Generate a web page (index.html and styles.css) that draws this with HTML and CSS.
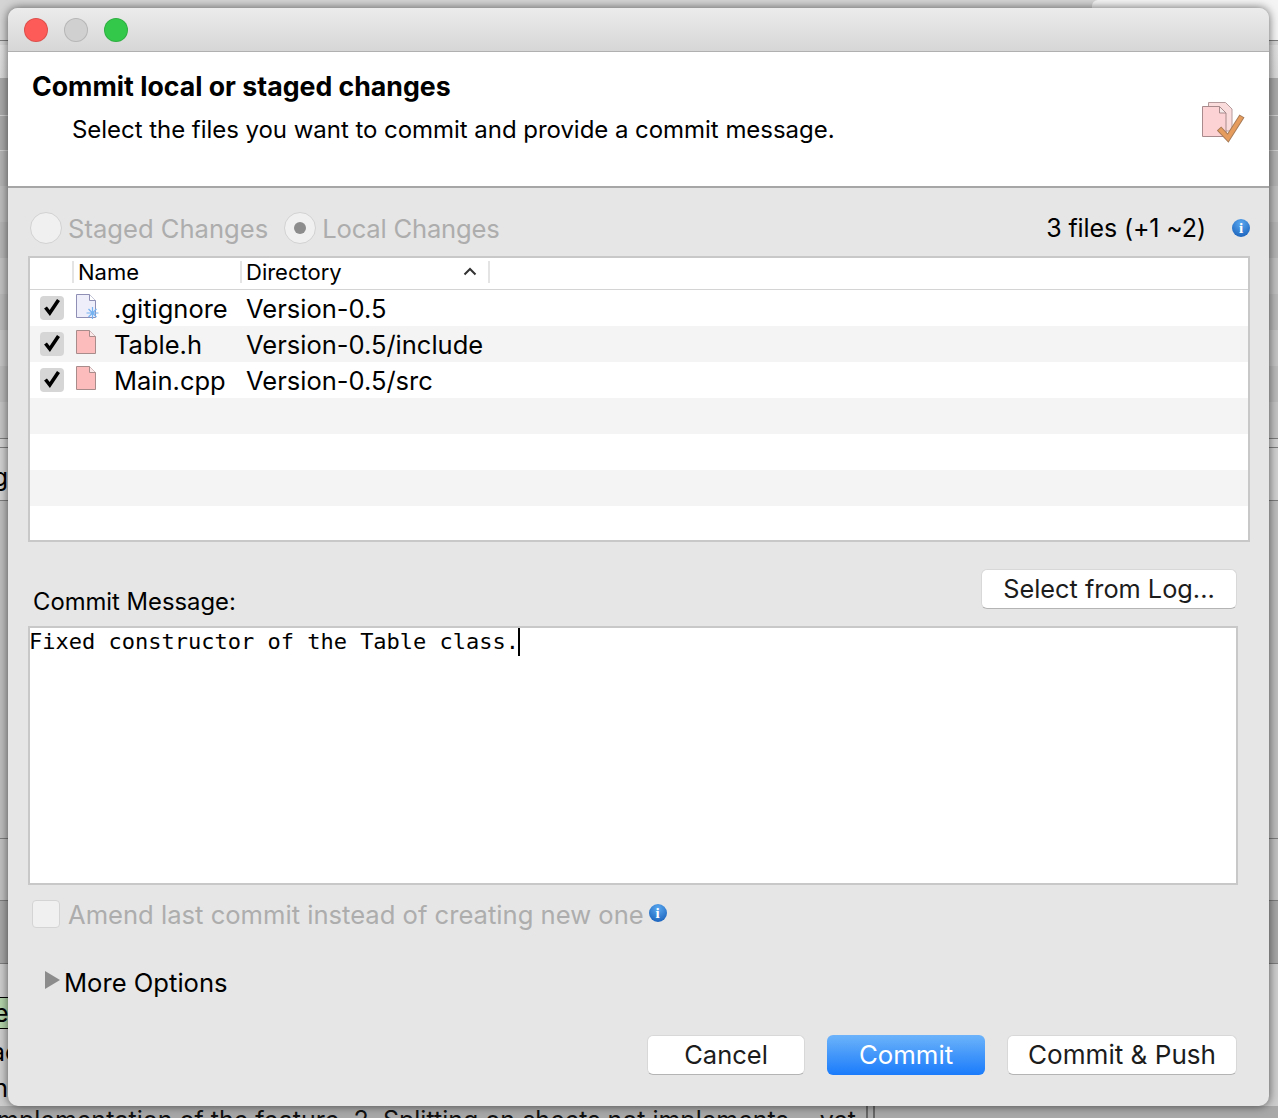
FILE: index.html
```html
<!DOCTYPE html>
<html lang="en">
<head>
    <meta charset="UTF-8">
    <title>Commit local or staged changes</title>
    <link rel="stylesheet" href="styles.css">
</head>
<body>

<div id="backdrop">
    <div class="bgTab"></div>
    <div class="bgLine soft" style="top: 115px"></div>
    <div class="bgLine soft" style="top: 150px"></div>
    <div class="bgLine" style="top: 40px"></div>
    <div class="bgLine" style="top: 438px"></div>
    <div class="bgLine" style="top: 447px"></div>
    <div class="bgLine" style="top: 500px"></div>
    <div class="bgLine" style="top: 838px"></div>
    <div class="bgLine" style="top: 900px"></div>
    <div class="bgLine" style="top: 963px"></div>
    <span class="bgLetter" style="top: 462px">g</span>
    <span class="bgCell">e</span>
    <span class="bgLetter ac" style="top: 1037px">ac</span>
    <span class="bgLetter" style="top: 1073px">n</span>
    <div class="bgText">implementation of the feature. 2. Splitting on sheets not implements <span class="bgTail">yet</span></div>
    <div class="bgRule first"></div>
    <div class="bgRule second"></div>
</div>

<div id="dialog">
    <div id="titleBar">
        <span class="light red"></span>
        <span class="light grey"></span>
        <span class="light green"></span>
    </div>

    <div id="banner">
        <div>
            <h2>Commit local or staged changes</h2>
            <p>Select the files you want to commit and provide a commit message.</p>
        </div>
        <svg class="bannerIcon" width="44" height="42" viewBox="0 0 44 42">
            <path d="M7.5 1.500H24.500L31 8V30H7.500z" fill="#fbdcdd" stroke="#b59a9c"/>
            <path d="M1.500 5.500H18.500L25 12V35.500H1.500z" fill="#fdd2d4" stroke="#a88a8c"/>
            <path d="M18.500 5.500V12H25z" fill="#f6eaea" stroke="#a88a8c"/>
            <path d="M18 27.500L27 37L41 15" fill="none" stroke="#a87c58" stroke-width="6"/>
            <path d="M18.700 28.200L27 37L40.500 15.800" fill="none" stroke="#e59c5c" stroke-width="4"/>
        </svg>
    </div>

    <div id="content">
        <div class="modeRow">
            <span class="radio"></span>
            <span class="modeLabel">Staged Changes</span>
            <span class="radio selected"></span>
            <span class="modeLabel localLabel">Local Changes</span>
            <span class="fileCount">3 files (+1 ~2)</span>
            <span class="infoIcon">i</span>
        </div>

        <div id="fileTable">
            <div class="tableHead">
                <div class="colCheck"></div>
                <div class="colName">Name</div>
                <div class="colDir">Directory
                    <svg class="sortArrow" width="14" height="9" viewBox="0 0 14 9"><path d="M1.500 7.500L7 2l5.500 5.500" fill="none" stroke="#333" stroke-width="2"/></svg>
                </div>
            </div>
            <div class="fileRow">
                <div class="colCheck">
                    <svg class="tick" width="24" height="24" viewBox="0 0 24 24"><path d="M5.500 11.500L9.800 17L18.500 4" fill="none" stroke="#000" stroke-width="3.600"/></svg>
                </div>
                <div class="fileIcon">
                    <svg width="24" height="28" viewBox="0 0 24 28">
                        <path d="M.5 .5H13.500L19.500 6.500V23.500H.5z" fill="#eeeefa" stroke="#8f8fb5"/>
                        <path d="M13.500 .5V6.500H19.500" fill="#fff" stroke="#8f8fb5"/>
                        <path d="M16.500 13v12M10.500 19h12M12.500 15l8 8M20.500 15l-8 8" stroke="#74b2f0" stroke-width="1.200"/>
                    </svg>
                </div>
                <div class="colName">.gitignore</div>
                <div class="colDir">Version-0.5</div>
            </div>
            <div class="fileRow">
                <div class="colCheck">
                    <svg class="tick" width="24" height="24" viewBox="0 0 24 24"><path d="M5.500 11.500L9.800 17L18.500 4" fill="none" stroke="#000" stroke-width="3.600"/></svg>
                </div>
                <div class="fileIcon">
                    <svg width="24" height="28" viewBox="0 0 24 28">
                        <path d="M.5 .5H13.500L19.500 6.500V23.500H.5z" fill="#fdbcbc" stroke="#a88c8c"/>
                        <path d="M13.500 .5V6.500H19.500" fill="#fbe8e8" stroke="#a88c8c"/>
                    </svg>
                </div>
                <div class="colName">Table.h</div>
                <div class="colDir">Version-0.5/include</div>
            </div>
            <div class="fileRow">
                <div class="colCheck">
                    <svg class="tick" width="24" height="24" viewBox="0 0 24 24"><path d="M5.500 11.500L9.800 17L18.500 4" fill="none" stroke="#000" stroke-width="3.600"/></svg>
                </div>
                <div class="fileIcon">
                    <svg width="24" height="28" viewBox="0 0 24 28">
                        <path d="M.5 .5H13.500L19.500 6.500V23.500H.5z" fill="#fdbcbc" stroke="#a88c8c"/>
                        <path d="M13.500 .5V6.500H19.500" fill="#fbe8e8" stroke="#a88c8c"/>
                    </svg>
                </div>
                <div class="colName">Main.cpp</div>
                <div class="colDir">Version-0.5/src</div>
            </div>
            <div class="fileRow"></div>
            <div class="fileRow"></div>
            <div class="fileRow"></div>
            <div class="fileRow"></div>
        </div>

        <div class="messageHead">
            <label>Commit Message:</label>
            <button class="btn logBtn">Select from Log...</button>
        </div>
        <div id="messageBox">Fixed constructor of the Table class.<span class="caret"></span></div>

        <div class="amendRow">
            <span class="emptyCheck"></span>
            <span class="modeLabel">Amend last commit instead of creating new one</span>
            <span class="infoIcon small">i</span>
        </div>

        <div class="moreRow">
            <span class="triangle"></span>
            More Options
        </div>

        <div class="buttonRow">
            <button class="btn cancelBtn">Cancel</button>
            <button class="btn primary commitBtn">Commit</button>
            <button class="btn pushBtn">Commit &amp; Push</button>
        </div>
    </div>
</div>

</body>
</html>
```
FILE: styles.css
```css
body {
    font-family: 'Inter', 'Liberation Sans', sans-serif;
    color: #000;
    margin: 0;
    width: 1278px;
    height: 1118px;
    overflow: hidden;
    position: relative;
}

/* blurred app behind the sheet, bands are its table rows */
#backdrop {
    position: absolute;
    inset: 0;
    overflow: hidden;
    background: linear-gradient(to bottom,
        #d4d4d4 0, #d4d4d4 45px,
        #e0e0e0 45px, #d8d8d8 78px,
        #a8a8a8 78px, #a8a8a8 150px,
        #b2b2b2 150px, #b2b2b2 186px,
        #bcbcbc 186px, #bcbcbc 222px,
        #b4b4b4 222px, #b4b4b4 258px,
        #c0c0c0 258px, #c0c0c0 294px,
        #b8b8b8 294px, #b8b8b8 330px,
        #c4c4c4 330px, #c4c4c4 366px,
        #bababa 366px, #bababa 402px,
        #c4c4c4 402px, #c4c4c4 438px,
        #d0d0d0 438px, #d0d0d0 500px,
        #bdbdbd 500px, #bdbdbd 838px,
        #c0c0c0 838px, #c0c0c0 900px,
        #a6a6a6 900px, #a6a6a6 963px,
        #cdcdcd 963px, #cdcdcd 1106px,
        #a8a8a8 1106px, #a8a8a8 1118px);
}

.bgTab {
    position: absolute;
    left: 1092px;
    top: 0;
    width: 186px;
    height: 40px;
    background: #f4f4f4;
    border-radius: 6px 0 0 0;
}

.bgLine {
    position: absolute;
    left: 0;
    width: 100%;
    height: 1px;
    background: #7d7d7d;
}

.bgLine.soft {
    background: #cfcfcf;
}

.bgLetter {
    position: absolute;
    left: -12px;
    font-size: 25px;
    line-height: 30px;
    width: 20px;
    text-align: right;
    white-space: nowrap;
}

.bgLetter.ac {
    left: -9px;
}

.bgCell {
    position: absolute;
    left: 0;
    top: 997px;
    width: 8px;
    height: 32px;
    overflow: hidden;
    background: #b2d4aa;
    border-top: 1px solid #000;
    border-bottom: 1px solid #000;
    font-size: 25px;
    line-height: 30px;
    box-sizing: border-box;
    text-indent: -6px;
}

.bgText {
    position: absolute;
    left: -9px;
    top: 1105px;
    font-size: 25px;
    line-height: 30px;
    white-space: nowrap;
    color: #111;
}

.bgTail {
    margin-left: 24px;
}

.bgRule {
    position: absolute;
    top: 1106px;
    height: 12px;
    width: 2px;
    background: #666;
}

.bgRule.first { left: 866px; }
.bgRule.second { left: 873px; }

#dialog {
    position: absolute;
    left: 8px;
    top: 8px;
    width: 1261px;
    height: 1098px;
    display: flex;
    flex-direction: column;
    background-color: #e6e6e6;
    border-radius: 10px;
    overflow: hidden;
    box-shadow: 0 0 10px rgba(0, 0, 0, 0.6);
}

#titleBar {
    height: 43px;
    flex: none;
    display: flex;
    align-items: center;
    gap: 16px;
    padding-left: 16px;
    background: linear-gradient(to bottom, #ececec, #d6d6d6);
    border-bottom: 1px solid #b0b0b0;
}

.light {
    width: 24px;
    height: 24px;
    border-radius: 50%;
    box-sizing: border-box;
    border: 1px solid rgba(0, 0, 0, 0.12);
}

.red { background-color: #fc5b57; }
.grey { background-color: #d0d0d0; }
.green { background-color: #34c84a; }

#banner {
    height: 134px;
    flex: none;
    display: flex;
    justify-content: space-between;
    background-color: #fff;
    border-bottom: 2px solid #a6a6a6;
}

#banner h2 {
    margin: 18px 0 0 24px;
    font-size: 26.700px;
    line-height: 32px;
    font-weight: 700;
}

#banner p {
    margin: 12px 0 0 64px;
    font-size: 24px;
    line-height: 32px;
    letter-spacing: -0.04px;
}

.bannerIcon {
    margin: 49px 24px 0 0;
}

#content {
    flex: 1;
    display: flex;
    flex-direction: column;
    padding: 0 19px 0 20px;
}

.modeRow {
    height: 68px;
    flex: none;
    display: flex;
    align-items: center;
    font-size: 25.600px;
    box-sizing: border-box;
    padding: 12px 0 0 2px;
}

.radio {
    width: 32px;
    height: 32px;
    border-radius: 50%;
    background-color: #f0f0f0;
    border: 1px solid #d2d2d2;
    box-sizing: border-box;
    margin-right: 6px;
    display: flex;
    align-items: center;
    justify-content: center;
}

.radio.selected {
    margin-left: 16px;
}

.radio.selected::after {
    content: '';
    width: 12px;
    height: 12px;
    border-radius: 50%;
    background-color: #8c8c8c;
}

.modeLabel {
    color: #adadad;
}

.localLabel {
    letter-spacing: -0.2px;
}

.fileCount {
    margin-left: auto;
    margin-right: 26px;
    font-size: 25px;
    letter-spacing: -0.12px;
}

.infoIcon {
    width: 18px;
    height: 18px;
    border-radius: 50%;
    background: radial-gradient(circle at 50% 25%, #5aa8f0, #1158b4);
    color: #fff;
    font-family: 'Liberation Serif', serif;
    font-weight: 700;
    font-size: 15px;
    line-height: 18px;
    text-align: center;
}

.infoIcon.small {
    margin: -3px 0 0 5px;
}

#fileTable {
    height: 286px;
    flex: none;
    overflow: hidden;
    background-color: #fff;
    border: 2px solid #c8c8c8;
    box-sizing: border-box;
}

.tableHead {
    height: 32px;
    display: flex;
    align-items: center;
    font-size: 22px;
    border-bottom: 1px solid #d4d4d4;
    box-sizing: border-box;
    padding-bottom: 3px;
}

.tableHead .colCheck {
    width: 44px;
    box-sizing: border-box;
    flex: none;
    height: 22px;
    border-right: 2px solid #e4e4e4;
}

.tableHead .colName {
    width: 168px;
    flex: none;
    padding-left: 4px;
    box-sizing: border-box;
    height: 22px;
    line-height: 22px;
    border-right: 2px solid #e4e4e4;
}

.tableHead .colDir {
    width: 248px;
    height: 22px;
    line-height: 22px;
    padding-left: 4px;
    box-sizing: border-box;
    border-right: 2px solid #e4e4e4;
    position: relative;
}

.sortArrow {
    position: absolute;
    right: 11px;
    top: 6px;
}

.fileRow {
    height: 36px;
    flex: none;
    display: flex;
    align-items: center;
    font-size: 25.500px;
}

.fileRow:nth-child(odd) {
    background-color: #f4f4f4;
}

.fileRow .colCheck {
    width: 46px;
    flex: none;
    align-self: flex-start;
    padding: 6px 0 0 10px;
    box-sizing: border-box;
}

.fileRow .colName {
    width: 132px;
    flex: none;
}

.fileIcon {
    width: 38px;
    flex: none;
    align-self: flex-start;
    padding-top: 4px;
}

.fileIcon svg {
    display: block;
}

.tick {
    display: block;
    border-radius: 4px;
    background-color: #d6d6d6;
}

.messageHead {
    height: 84px;
    flex: none;
    display: flex;
    justify-content: space-between;
    align-items: flex-start;
    padding-right: 13px;
    font-size: 23.800px;
}

.messageHead label {
    margin: 44px 0 0 5px;
    line-height: 32px;
}

.btn {
    font-family: 'Inter', 'Liberation Sans', sans-serif;
    font-size: 25.500px;
    height: 40px;
    color: #1c1c1c;
    background-color: #fff;
    border: 1px solid #d8d8d8;
    border-bottom-color: #b4b4b4;
    border-radius: 6px;
    padding: 0 0 2px;
}

.logBtn {
    width: 256px;
    margin-top: 27px;
    font-size: 25.300px;
}

#messageBox {
    height: 259px;
    flex: none;
    margin-right: 12px;
    background-color: #fff;
    border: 2px solid #c8c8c8;
    box-sizing: border-box;
    font-family: 'DejaVu Sans Mono', 'Liberation Mono', monospace;
    font-size: 22px;
    line-height: 28px;
    white-space: pre;
    text-indent: -1px;
}

.caret {
    display: inline-block;
    width: 2px;
    height: 28px;
    background-color: #000;
    vertical-align: top;
    margin-left: -1px;
}

.amendRow {
    height: 60px;
    flex: none;
    display: flex;
    align-items: center;
    font-size: 25.600px;
    padding: 0 0 2px 4px;
    box-sizing: border-box;
}

.emptyCheck {
    width: 28px;
    height: 28px;
    border-radius: 4px;
    background-color: #f0f0f0;
    border: 1px solid #d4d4d4;
    box-sizing: border-box;
    margin-right: 8px;
}

.moreRow {
    display: flex;
    align-items: center;
    height: 40px;
    margin-top: 17px;
    font-size: 25.600px;
    padding-left: 17px;
}

.triangle {
    width: 0;
    height: 0;
    border-left: 15px solid #8c8c8c;
    border-top: 9px solid transparent;
    border-bottom: 9px solid transparent;
    margin: -4px 4px 0 0;
}

.buttonRow {
    display: flex;
    justify-content: flex-end;
    gap: 22px;
    margin-top: 33px;
    padding-right: 13px;
}

.cancelBtn { width: 158px; }
.commitBtn { width: 158px; font-size: 25.800px; }
.pushBtn { width: 230px; font-size: 26.100px; }

.btn.primary {
    color: #fff;
    background: linear-gradient(to bottom, #6cb3fa, #1a7bfb);
    border: none;
}
```
